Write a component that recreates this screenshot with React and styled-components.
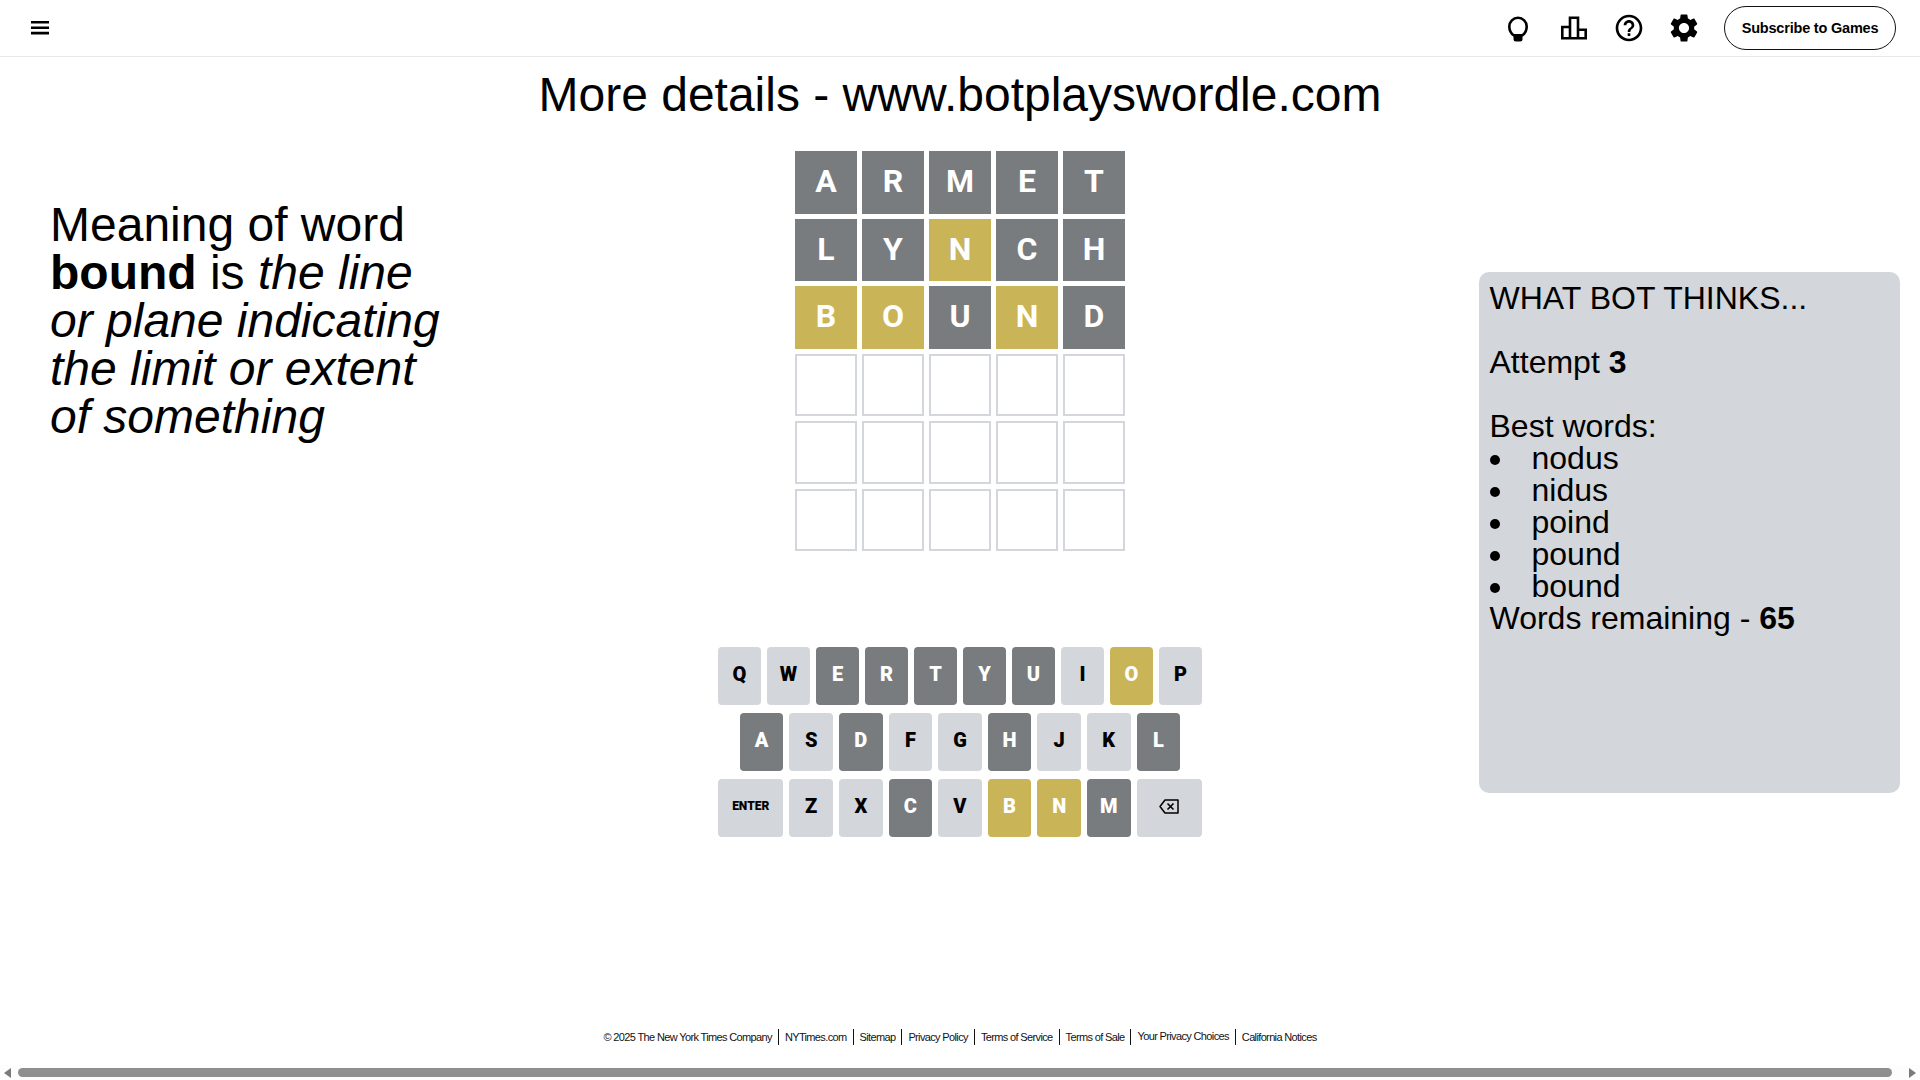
import React from "react";
import styled, { createGlobalStyle } from "styled-components";

const Global = createGlobalStyle`
  html, body { margin: 0; padding: 0; height: 100%; background: #fff; overflow: hidden; }
  * { box-sizing: border-box; }
  body { font-family: "Liberation Sans", Arial, sans-serif; color: #000; }
`;

const Page = styled.div`
  width: 1920px;
  height: 1080px;
  display: flex;
  flex-direction: column;
  background: #fff;
`;
const Header = styled.header`
  height: 57px;
  flex: none;
  display: flex;
  align-items: center;
  justify-content: space-between;
  padding: 0 24px 1px 31px;
  border-bottom: 1px solid #e8e8e8;
`;
const Tools = styled.div`
  display: flex;
  align-items: center;
`;
const IconSlot = styled.div`
  width: ${(p) => p.$w}px;
  display: flex;
  justify-content: center;
  align-items: center;
`;
const SubscribeButton = styled.div`
  width: 172px;
  height: 44px;
  margin-left: 12px;
  border: 1px solid #121212;
  border-radius: 22px;
  display: flex;
  align-items: center;
  justify-content: center;
  font-family: "Liberation Sans", Arial, sans-serif;
  font-weight: 700;
  font-size: 14.5px;
  letter-spacing: -0.2px;
`;
const Title = styled.h1`
  margin: 0;
  height: 94px;
  padding-top: 10px;
  font-weight: 400;
  font-size: 48px;
  line-height: 55px;
  text-align: center;
  flex: none;
`;
const Main = styled.main`
  flex: 1;
  display: grid;
  grid-template-columns: 718px 484px 718px;
`;
const Meaning = styled.p`
  margin: 50px 0 0 50px;
  width: 400px;
  font-size: 48px;
  line-height: 48px;
`;
const Game = styled.section`
  display: flex;
  flex-direction: column;
  align-items: center;
  padding-top: 0.3px;
`;
const Board = styled.div`
  width: 330px;
  height: 400px;
  display: grid;
  grid-template-columns: repeat(5, 1fr);
  grid-template-rows: repeat(6, 1fr);
  gap: 5px;
`;
const tileColor = { a: "#787c7e", p: "#c9b458" };
const Tile = styled.div`
  display: flex;
  align-items: center;
  justify-content: center;
  padding-bottom: 3px;
  font-family: Roboto, "Liberation Sans", sans-serif;
  font-weight: 700;
  font-size: 32px;
  color: #fff;
  background: ${(p) => tileColor[p.$s] || "#fff"};
  border: ${(p) => (p.$s ? "none" : "2px solid #d3d6da")};
`;
const Keyboard = styled.div`
  width: 484px;
  margin-top: 95.7px;
  display: flex;
  flex-direction: column;
  gap: 8px;
`;
const KeyRow = styled.div`
  display: flex;
  height: 58px;
`;
const Spacer = styled.div`
  flex: 0.5;
`;
const keyBg = { a: "#787c7e", p: "#c9b458" };
const Key = styled.div`
  flex: ${(p) => (p.$wide ? 1.5 : 1)};
  min-width: 0;
  margin-right: ${(p) => (p.$last ? 0 : 6)}px;
  padding-bottom: 3px;
  border-radius: 4px;
  display: flex;
  align-items: center;
  justify-content: center;
  background: ${(p) => keyBg[p.$s] || "#d3d6da"};
  color: ${(p) => (p.$s ? "#fff" : "#000")};
  font-family: Roboto, "Liberation Sans", sans-serif;
  font-weight: 900;
  font-size: ${(p) => (p.$small ? 12 : 20)}px;
`;
const Side = styled.aside`
  display: flex;
  justify-content: flex-end;
  padding-right: 20px;
`;
const Panel = styled.div`
  width: 421.5px;
  height: 521px;
  margin-top: 121px;
  padding: 10px 11px;
  background: #d3d6da;
  border-radius: 10px;
  font-size: 32px;
  line-height: 32px;
`;
const PanelLine = styled.div`
  margin-bottom: ${(p) => p.$gap || 0}px;
`;
const Words = styled.ul`
  list-style: none;
  margin: 0;
  padding: 0;
`;
const Word = styled.li`
  display: flex;
  align-items: center;
  &::before {
    content: "";
    width: 10px;
    height: 10px;
    border-radius: 50%;
    background: #000;
    margin: 3px 32px 0 0;
    flex: none;
  }
`;
const Footer = styled.footer`
  flex: none;
  height: 20px;
  margin-bottom: 18px;
  display: flex;
  justify-content: center;
  align-items: center;
  font-size: 11px;
  letter-spacing: -0.64px;
  color: #121212;
`;
const FootItem = styled.span`
  padding: 0 6px;
  line-height: 16px;
  border-left: ${(p) => (p.$first ? "none" : "1.5px solid #121212")};
`;
const FootInner = styled.span`
  position: relative;
  top: ${(p) => (p.$up ? -1 : 0)}px;
`;
const ScrollBar = styled.div`
  flex: none;
  height: 15px;
  display: flex;
  align-items: center;
  background: #fdfdfd;
  padding: 0 4px;
  gap: 7px;
`;
const Thumb = styled.div`
  flex: 1;
  height: 9px;
  margin-right: 10px;
  border-radius: 5px;
  background: #8f8f8f;
`;

const Hamburger = () => (
  <svg width="18" height="14" viewBox="0 0 18 14">
    <path d="M0 0h18v2.6H0zM0 5.4h18v2.6H0zM0 10.8h18v2.6H0z" fill="#000" />
  </svg>
);
const Bulb = () => (
  <svg width="32" height="32" viewBox="0 0 32 32" fill="none">
    <path d="M12 23.5C9 21.5 7.3 18.5 7.3 14.5a8.7 8.7 0 0 1 17.4 0c0 4-1.7 7-4.7 9z" stroke="#000" strokeWidth="2.6" />
    <path d="M11.5 22h9v5a2.5 2.5 0 0 1-2.5 2.5h-4a2.5 2.5 0 0 1-2.5-2.5z" fill="#000" />
  </svg>
);
const Stats = () => (
  <svg width="32" height="32" viewBox="0 0 32 32" fill="none">
    <path d="M4.3 26.2V15H12V5.8h8v12h7.7v8.4zM12 15v11.2M20 17.8v8.4" stroke="#000" strokeWidth="2.6" />
  </svg>
);
const Help = () => (
  <svg width="32" height="32" viewBox="0 0 24 24">
    <path fill="#000" d="M11 18h2v-2h-2v2zm1-16C6.48 2 2 6.48 2 12s4.48 10 10 10 10-4.48 10-10S17.52 2 12 2zm0 18c-4.41 0-8-3.59-8-8s3.59-8 8-8 8 3.59 8 8-3.59 8-8 8zm0-14c-2.21 0-4 1.79-4 4h2c0-1.1.9-2 2-2s2 .9 2 2c0 2-3 1.75-3 5h2c0-2.25 3-2.5 3-5 0-2.21-1.79-4-4-4z" />
  </svg>
);
const Gear = () => (
  <svg width="34" height="34" viewBox="0 0 24 24">
    <path fill="#000" d="M19.14 12.94c.04-.3.06-.61.06-.94 0-.32-.02-.64-.07-.94l2.03-1.58c.18-.14.23-.41.12-.61l-1.92-3.32c-.12-.22-.37-.29-.59-.22l-2.39.96c-.5-.38-1.03-.7-1.62-.94L14.4 2.81c-.04-.24-.24-.41-.48-.41h-3.84c-.24 0-.43.17-.47.41L9.25 5.35c-.59.24-1.13.57-1.62.94l-2.39-.96c-.22-.08-.47 0-.59.22L2.74 8.87c-.12.21-.08.47.12.61l2.03 1.58c-.05.3-.09.63-.09.94s.02.64.07.94l-2.03 1.58c-.18.14-.23.41-.12.61l1.92 3.32c.12.22.37.29.59.22l2.39-.96c.5.38 1.03.7 1.62.94l.36 2.54c.05.24.24.41.48.41h3.84c.24 0 .44-.17.47-.41l.36-2.54c.59-.24 1.13-.56 1.62-.94l2.39.96c.22.08.47 0 .59-.22l1.92-3.32c.12-.22.07-.47-.12-.61l-2.01-1.58zM12 15.6c-1.98 0-3.6-1.62-3.6-3.6s1.62-3.6 3.6-3.6 3.6 1.62 3.6 3.6-1.62 3.6-3.6 3.6z" />
  </svg>
);
const Backspace = () => (
  <svg width="20" height="15" viewBox="0 0 20 15" fill="none">
    <path d="M6 1h13v13H6L1 7.5z" stroke="#000" strokeWidth="1.5" strokeLinejoin="round" />
    <path d="M8.5 4.5l6 6M14.5 4.5l-6 6" stroke="#000" strokeWidth="1.6" />
  </svg>
);
const ArrowLeft = () => (
  <svg width="7" height="10" viewBox="0 0 7 10"><path d="M7 0v10L0 5z" fill="#7a7a7a" /></svg>
);
const ArrowRight = () => (
  <svg width="7" height="10" viewBox="0 0 7 10"><path d="M0 0v10l7-5z" fill="#7a7a7a" /></svg>
);

const rows = [
  [["A","a"],["R","a"],["M","a"],["E","a"],["T","a"]],
  [["L","a"],["Y","a"],["N","p"],["C","a"],["H","a"]],
  [["B","p"],["O","p"],["U","a"],["N","p"],["D","a"]],
];
const empties = Array.from({ length: 15 });
const kb = { E:"a",R:"a",T:"a",Y:"a",U:"a",O:"p",A:"a",D:"a",H:"a",L:"a",C:"a",B:"p",N:"p",M:"a" };
const keys = (s) => s.split("");
const footer = ["© 2025 The New York Times Company","NYTimes.com","Sitemap","Privacy Policy","Terms of Service","Terms of Sale","Your Privacy Choices","California Notices"];
const best = ["nodus","nidus","poind","pound","bound"];

export default function App() {
  return (
    <Page>
      <Global />
      <Header>
        <Hamburger />
        <Tools>
          <IconSlot $w={56}><Bulb /></IconSlot>
          <IconSlot $w={55}><Stats /></IconSlot>
          <IconSlot $w={55}><Help /></IconSlot>
          <IconSlot $w={56}><Gear /></IconSlot>
          <SubscribeButton>Subscribe to Games</SubscribeButton>
        </Tools>
      </Header>
      <Title>More details - www.botplayswordle.com</Title>
      <Main>
        <Meaning>
          Meaning of word <b>bound</b> is <i>the line or plane indicating the limit or extent of something</i>
        </Meaning>
        <Game>
          <Board>
            {rows.flat().map(([l, s], i) => <Tile key={i} $s={s}>{l}</Tile>)}
            {empties.map((_, i) => <Tile key={"e" + i} />)}
          </Board>
          <Keyboard>
            <KeyRow>
              {keys("QWERTYUIOP").map((k, i) => <Key key={k} $s={kb[k]} $last={i === 9}>{k}</Key>)}
            </KeyRow>
            <KeyRow>
              <Spacer />
              {keys("ASDFGHJKL").map((k) => <Key key={k} $s={kb[k]} $last={k === "L"}>{k}</Key>)}
              <Spacer />
            </KeyRow>
            <KeyRow>
              <Key $wide $small>ENTER</Key>
              {keys("ZXCVBNM").map((k) => <Key key={k} $s={kb[k]}>{k}</Key>)}
              <Key $wide $last><Backspace /></Key>
            </KeyRow>
          </Keyboard>
        </Game>
        <Side>
          <Panel>
            <PanelLine $gap={32}>WHAT BOT THINKS...</PanelLine>
            <PanelLine $gap={32}>Attempt <b>3</b></PanelLine>
            <PanelLine>Best words:</PanelLine>
            <Words>{best.map((w) => <Word key={w}>{w}</Word>)}</Words>
            <PanelLine>Words remaining - <b>65</b></PanelLine>
          </Panel>
        </Side>
      </Main>
      <Footer>
        {footer.map((t, i) => (
          <FootItem key={t} $first={i === 0}><FootInner $up={i === 6}>{t}</FootInner></FootItem>
        ))}
      </Footer>
      <ScrollBar>
        <ArrowLeft />
        <Thumb />
        <ArrowRight />
      </ScrollBar>
    </Page>
  );
}
